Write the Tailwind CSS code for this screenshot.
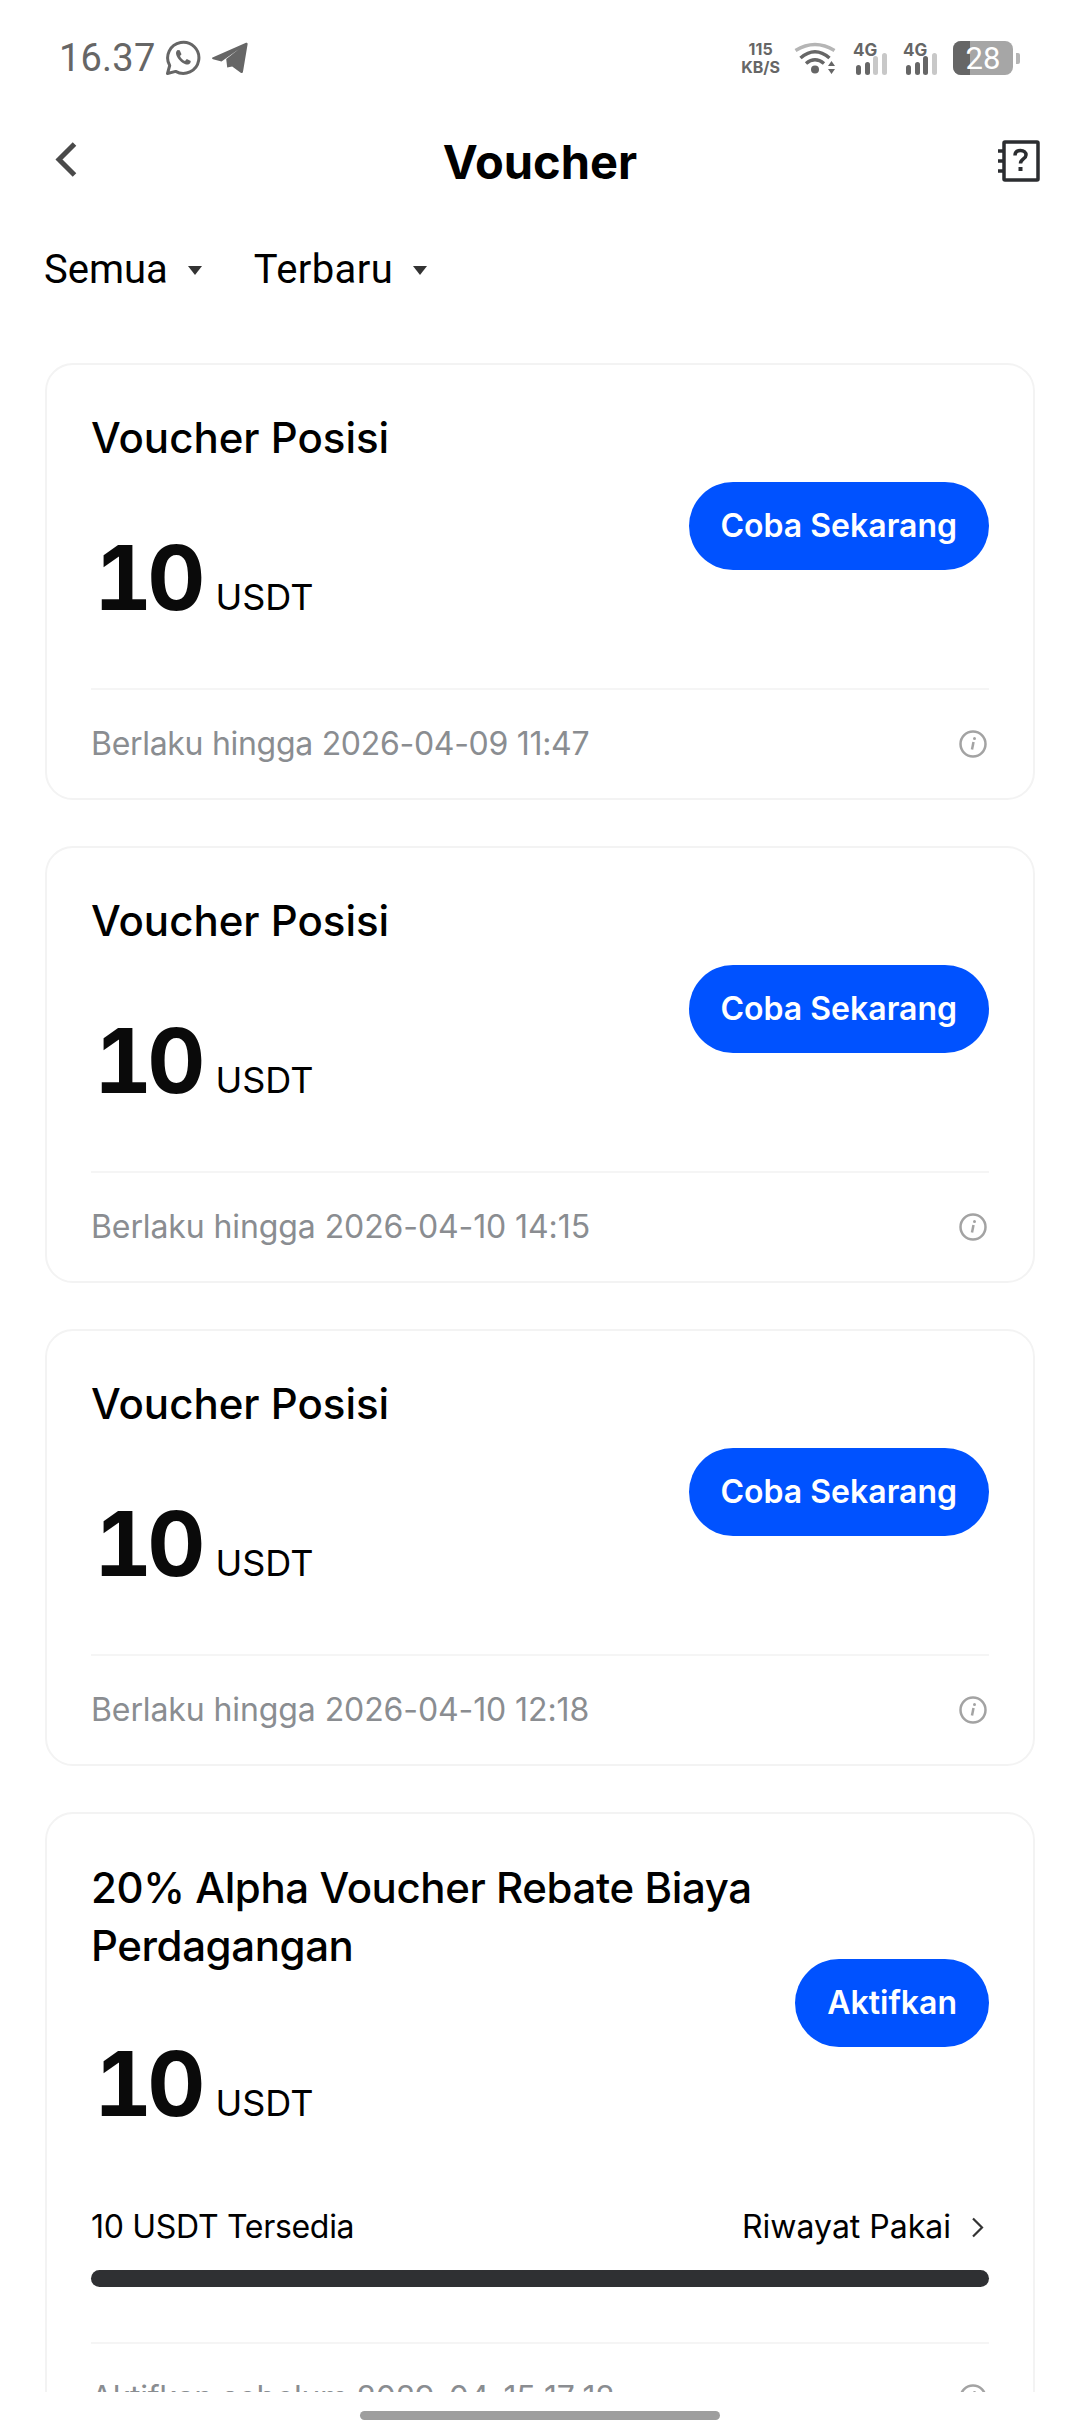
<!DOCTYPE html>
<html lang="en">
<head>
  <meta charset="UTF-8">
  <meta name="viewport" content="width=device-width, initial-scale=1.0">
  <title>Voucher</title>
  <script src="https://cdn.jsdelivr.net/npm/@tailwindcss/browser@4"></script>
</head>
<body class="bg-white font-['Inter',sans-serif] antialiased">
  <div class="w-[1080px] h-[2436px] overflow-hidden flex flex-col">

    <!-- Status bar -->
    <div class="h-[116px] shrink-0 flex items-center justify-between pl-[59px] pr-[60px] text-[#666666]">
      <div class="flex items-center">
        <span class="font-['Roboto',sans-serif] text-[38px] leading-none tracking-[0.2px]">16.37</span>
        <svg class="ml-[10px]" width="36" height="36" viewBox="0 0 36 36" fill="none">
          <path d="M2.500 33.500l2.200-8A15.600 15.600 0 1 1 10.600 31.400z" stroke="#666666" stroke-width="3" stroke-linejoin="round"/>
          <path d="M12.600 10c-1.600 1-2 3-1.200 5.200 1.300 3.500 5 7.600 9 9 2.200.8 4.200.2 5-1.500l.4-1.600-4-2-1.800 1.800c-2.200-.8-4-2.600-5-5l1.500-1.700-1.800-4z" fill="#666666"/>
        </svg>
        <svg class="ml-[11px]" width="36" height="32" viewBox="0 0 36 32">
          <path d="M0.500 15.500 34 .8c1-.4 1.800.4 1.600 1.400L31 29.800c-.2 1.200-1.400 1.600-2.300.9l-8.500-6.300-5 1-1-8.500L27 7 9.500 19.500 1 17.300c-1-.3-1.300-1.300-.5-1.800z" fill="#666666"/>
        </svg>
      </div>
      <div class="flex items-center">
        <div class="flex flex-col items-center font-bold text-[16px] leading-[18px] text-[#666666]">
          <span>115</span><span>KB/S</span>
        </div>
        <svg class="ml-[14px]" width="42" height="33" viewBox="0 0 42 33" fill="none">
          <path d="M1.500 8.500Q21-3.500 40.500 8.500" stroke="#b5b5b5" stroke-width="3.500"/>
          <path d="M6.500 16Q21 3.500 35.500 16" stroke="#666666" stroke-width="3.500"/>
          <path d="M12 21.500Q21 14 30 21.500" stroke="#666666" stroke-width="3.500"/>
          <circle cx="21" cy="27.500" r="4" fill="#666666"/>
          <path d="M37.500 19l3.500 5h-7zM37.500 32l3.500-5h-7z" fill="#666666"/>
        </svg>
        <svg class="ml-[17px]" width="34" height="34" viewBox="0 0 34 34">
          <text x="0" y="15" font-family="Inter" font-weight="700" font-size="17" fill="#666666">4G</text>
          <rect x="3" y="24" width="5" height="10" rx="2.500" fill="#666666"/>
          <rect x="12" y="21" width="5" height="13" rx="2.500" fill="#666666"/>
          <rect x="20" y="15" width="5" height="19" rx="2.500" fill="#c8c8c8"/>
          <rect x="29" y="12" width="5" height="22" rx="2.500" fill="#c8c8c8"/>
        </svg>
        <svg class="ml-[16px]" width="34" height="34" viewBox="0 0 34 34">
          <text x="0" y="15" font-family="Inter" font-weight="700" font-size="17" fill="#666666">4G</text>
          <rect x="3" y="24" width="5" height="10" rx="2.500" fill="#666666"/>
          <rect x="12" y="21" width="5" height="13" rx="2.500" fill="#666666"/>
          <rect x="20" y="15" width="5" height="19" rx="2.500" fill="#666666"/>
          <rect x="29" y="12" width="5" height="22" rx="2.500" fill="#c8c8c8"/>
        </svg>
        <div class="ml-[16px] flex items-center">
          <div class="relative w-[60px] h-[34px] rounded-[8px] bg-[#a6a6a6] overflow-hidden flex items-center justify-center">
            <div class="absolute left-0 top-0 bottom-0 w-[17px] bg-[#666666]"></div>
            <span class="relative font-['Roboto',sans-serif] text-[31px] leading-none text-white">28</span>
          </div>
          <div class="ml-[3px] w-[4px] h-[11px] rounded-r-[2px] bg-[#b5b5b5]"></div>
        </div>
      </div>
    </div>

    <!-- Header -->
    <div class="relative h-[90px] shrink-0 flex items-center justify-center">
      <svg class="absolute left-[54px] top-[24px]" width="24" height="38" viewBox="0 0 24 38" fill="none">
        <path d="M20.500 4 5 19.500 20.500 35" stroke="#4a4a4a" stroke-width="5"/>
      </svg>
      <h1 class="text-[47px] font-bold text-black leading-none">Voucher</h1>
      <svg class="absolute right-[40px] top-[24px]" width="42" height="42" viewBox="0 0 42 42" fill="none">
        <rect x="6" y="2" width="34" height="38" rx="1" stroke="#2b2d30" stroke-width="3.500"/>
        <path d="M0 11h7M0 21h7M0 31h7" stroke="#2b2d30" stroke-width="3.500"/>
        <path d="M17 15.500c0-3 2-5 5.500-5s5.500 2 5.500 4.500c0 4-5.500 4-5.500 8.500" stroke="#2b2d30" stroke-width="3.500"/>
        <rect x="20.500" y="27" width="4" height="4" fill="#2b2d30"/>
      </svg>
    </div>

    <!-- Filters -->
    <div class="mt-[32px] h-[64px] shrink-0 flex items-center pl-[44px] text-[40px] text-black font-['Roboto',sans-serif]">
      <span>Semua</span>
      <span class="ml-[20px] w-0 h-0 border-x-[7px] border-x-transparent border-t-[9px] border-t-[#333333]"></span>
      <span class="ml-[52px] tracking-[0.4px]">Terbaru</span>
      <span class="ml-[20px] w-0 h-0 border-x-[7px] border-x-transparent border-t-[9px] border-t-[#333333]"></span>
    </div>

    <!-- Voucher list -->
    <div class="min-h-0 flex-1 overflow-hidden px-[45px] pt-[61px] flex flex-col gap-[46px]">

      <div class="shrink-0 h-[437px] border-2 border-[#f3f3f3] rounded-[28px] px-[44px] pt-[45px] flex flex-col">
        <div class="h-[232px] flex items-center justify-between">
          <div class="self-start">
            <div class="text-[42px] font-medium leading-[56px] text-black">Voucher Posisi</div>
            <div class="mt-[70px] flex items-baseline pl-[3px]">
              <span class="text-[90px] font-bold leading-[84px] tabular-nums tracking-[-5px] text-[#0a0a0a]">10</span>
              <span class="ml-[15px] text-[36px] leading-none text-black">USDT</span>
            </div>
          </div>
          <div class="h-[88px] px-[32px] rounded-full bg-[#0052ff] flex items-center text-[32px] font-semibold text-white">Coba Sekarang</div>
        </div>
        <div class="mt-[46px] h-[110px] border-t-2 border-[#f5f5f5] flex items-center justify-between">
          <span class="text-[32px] tracking-[-0.3px] text-[#8a8d91]">Berlaku hingga 2026-04-09 11:47</span>
          <svg class="mr-[2px]" width="28" height="28" viewBox="0 0 28 28" fill="none">
            <circle cx="14" cy="14" r="12.500" stroke="#a3a3a3" stroke-width="2.500"/>
            <path d="M14.500 12l-1.500 7.500" stroke="#a3a3a3" stroke-width="2.500"/>
            <circle cx="15.500" cy="8.500" r="1.500" fill="#a3a3a3"/>
          </svg>
        </div>
      </div>

      <div class="shrink-0 h-[437px] border-2 border-[#f3f3f3] rounded-[28px] px-[44px] pt-[45px] flex flex-col">
        <div class="h-[232px] flex items-center justify-between">
          <div class="self-start">
            <div class="text-[42px] font-medium leading-[56px] text-black">Voucher Posisi</div>
            <div class="mt-[70px] flex items-baseline pl-[3px]">
              <span class="text-[90px] font-bold leading-[84px] tabular-nums tracking-[-5px] text-[#0a0a0a]">10</span>
              <span class="ml-[15px] text-[36px] leading-none text-black">USDT</span>
            </div>
          </div>
          <div class="h-[88px] px-[32px] rounded-full bg-[#0052ff] flex items-center text-[32px] font-semibold text-white">Coba Sekarang</div>
        </div>
        <div class="mt-[46px] h-[110px] border-t-2 border-[#f5f5f5] flex items-center justify-between">
          <span class="text-[32px] tracking-[-0.1px] text-[#8a8d91]">Berlaku hingga 2026-04-10 14:15</span>
          <svg class="mr-[2px]" width="28" height="28" viewBox="0 0 28 28" fill="none">
            <circle cx="14" cy="14" r="12.500" stroke="#a3a3a3" stroke-width="2.500"/>
            <path d="M14.500 12l-1.500 7.500" stroke="#a3a3a3" stroke-width="2.500"/>
            <circle cx="15.500" cy="8.500" r="1.500" fill="#a3a3a3"/>
          </svg>
        </div>
      </div>

      <div class="shrink-0 h-[437px] border-2 border-[#f3f3f3] rounded-[28px] px-[44px] pt-[45px] flex flex-col">
        <div class="h-[232px] flex items-center justify-between">
          <div class="self-start">
            <div class="text-[42px] font-medium leading-[56px] text-black">Voucher Posisi</div>
            <div class="mt-[70px] flex items-baseline pl-[3px]">
              <span class="text-[90px] font-bold leading-[84px] tabular-nums tracking-[-5px] text-[#0a0a0a]">10</span>
              <span class="ml-[15px] text-[36px] leading-none text-black">USDT</span>
            </div>
          </div>
          <div class="h-[88px] px-[32px] rounded-full bg-[#0052ff] flex items-center text-[32px] font-semibold text-white">Coba Sekarang</div>
        </div>
        <div class="mt-[46px] h-[110px] border-t-2 border-[#f5f5f5] flex items-center justify-between">
          <span class="text-[32px] tracking-[-0.1px] text-[#8a8d91]">Berlaku hingga 2026-04-10 12:18</span>
          <svg class="mr-[2px]" width="28" height="28" viewBox="0 0 28 28" fill="none">
            <circle cx="14" cy="14" r="12.500" stroke="#a3a3a3" stroke-width="2.500"/>
            <path d="M14.500 12l-1.500 7.500" stroke="#a3a3a3" stroke-width="2.500"/>
            <circle cx="15.500" cy="8.500" r="1.500" fill="#a3a3a3"/>
          </svg>
        </div>
      </div>

      <div class="shrink-0 border-2 border-[#f3f3f3] rounded-[28px] px-[44px] pt-[45px] flex flex-col">
        <div class="h-[288px] flex items-center justify-between">
          <div class="self-start">
            <div class="w-[680px] text-[42px] font-medium tracking-[-0.4px] leading-[58px] text-black">20% Alpha Voucher Rebate Biaya Perdagangan</div>
            <div class="mt-[67px] flex items-baseline pl-[3px]">
              <span class="text-[90px] font-bold leading-[84px] tabular-nums tracking-[-5px] text-[#0a0a0a]">10</span>
              <span class="ml-[15px] text-[36px] leading-none text-black">USDT</span>
            </div>
          </div>
          <div class="h-[88px] px-[32px] rounded-full bg-[#0052ff] flex items-center text-[32px] font-semibold text-white">Aktifkan</div>
        </div>
        <div class="mt-[60px] flex items-center justify-between text-[32px] leading-[40px] text-black">
          <span class="tracking-[-0.3px]">10 USDT Tersedia</span>
          <span class="flex items-center">Riwayat Pakai
            <svg class="ml-[20px] mr-[5px]" width="13" height="21" viewBox="0 0 13 21" fill="none">
              <path d="M2 1.500l9 9-9 9" stroke="#333333" stroke-width="2.200"/>
            </svg>
          </span>
        </div>
        <div class="mt-[23px] h-[17px] rounded-full bg-[#2f3033]"></div>
        <div class="mt-[55px] h-[110px] border-t-2 border-[#f5f5f5] flex items-center justify-between">
          <span class="text-[32px] tracking-[-0.3px] text-[#8a8d91]">Aktifkan sebelum 2029-04-15 17:12</span>
          <svg class="mr-[2px]" width="28" height="28" viewBox="0 0 28 28" fill="none">
            <circle cx="14" cy="14" r="12.500" stroke="#a3a3a3" stroke-width="2.500"/>
            <path d="M14.500 12l-1.500 7.500" stroke="#a3a3a3" stroke-width="2.500"/>
            <circle cx="15.500" cy="8.500" r="1.500" fill="#a3a3a3"/>
          </svg>
        </div>
      </div>
    </div>

    <!-- Gesture bar -->
    <div class="h-[44px] shrink-0 flex justify-center pt-[19px]">
      <div class="w-[360px] h-[9px] rounded-full bg-[#9e9e9e]"></div>
    </div>
  </div>
</body>
</html>
